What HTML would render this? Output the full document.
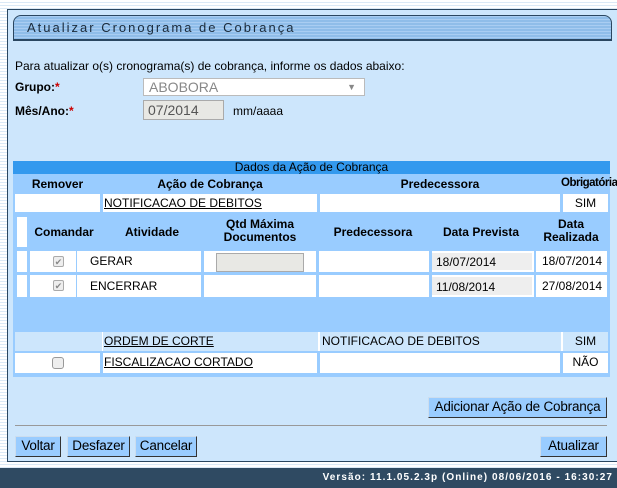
<!DOCTYPE html>
<html><head><meta charset="utf-8"><style>
*{box-sizing:border-box;margin:0;padding:0}
body{width:617px;height:488px;overflow:hidden;position:relative;font-family:"Liberation Sans",Arial,sans-serif;font-size:12px;color:#000;
background:repeating-linear-gradient(#fff 0 2px,#dbe9f6 2px 3px)}
.a{position:absolute;white-space:nowrap}
.panel{left:7px;top:9px;width:612px;height:453px;background:#cde6fc;border:1px solid #2a4660}
.tab{left:13px;top:15px;width:599px;height:26px;border:1px solid #2a4660;border-bottom-width:2px;border-radius:8px 8px 0 0;
background:repeating-linear-gradient(#a9cdf2 0 1px,#8fbde9 1px 3px);font-size:13px;letter-spacing:2px;padding:4px 0 0 13px;color:#1a2a3a}
.sel{left:143px;top:78px;width:222px;height:18px;background:#fff;border:1px solid #bbb;color:#888;font-size:14px;padding:0 5px;line-height:16px}
.inp{background:#e8e8e4;border:1px solid #aaa;color:#555}
.tbl{left:13px;top:161px;width:597px;height:216px;background:#99ccff}
.bar{left:13px;top:161px;width:597px;height:13px;background:#3399ee;text-align:center;font-size:12px;line-height:13px}
.w{background:#fff}
.h{font-weight:bold;text-align:center}
.u{text-decoration:underline}
.btn{background:#99ccff;border:1px solid #333;border-color:#cde #333 #333 #cde;font-size:13.5px;text-align:center;line-height:18px;height:21px;letter-spacing:-0.2px}
.cb{width:11px;height:11px;border:1px solid #aaa;border-radius:2px;background:#eee;font-size:9px;color:#888;text-align:center;line-height:10px}
.foot{left:0;top:468px;width:617px;height:20px;background:#2f4a62;color:#fff;font-family:"Liberation Sans",sans-serif;font-weight:bold;font-size:10px;text-align:right;padding-right:4px;line-height:20px;letter-spacing:1.05px}
</style></head><body>
<div class="a panel"></div>
<div class="a tab">Atualizar Cronograma de Cobrança</div>
<div class="a" style="left:15px;top:59px;">Para atualizar o(s) cronograma(s) de cobrança, informe os dados abaixo:</div>
<div class="a" style="left:15px;top:80px;font-weight:bold">Grupo:<span style="color:#c00">*</span></div>
<div class="a sel">ABOBORA<span style="position:absolute;right:8px;font-size:9px">▼</span></div>
<div class="a" style="left:15px;top:104px;font-weight:bold">Mês/Ano:<span style="color:#c00">*</span></div>
<div class="a inp" style="left:143px;top:100px;width:81px;height:20px;font-size:14px;padding:1px 4px">07/2014</div>
<div class="a" style="left:233px;top:104px">mm/aaaa</div>

<div class="a tbl"></div>
<div class="a bar">Dados da Ação de Cobrança</div>
<div class="a h" style="left:15px;top:177px;width:85px">Remover</div>
<div class="a h" style="left:103px;top:177px;width:214px">Ação de Cobrança</div>
<div class="a h" style="left:320px;top:177px;width:240px">Predecessora</div>
<div class="a h" style="left:561px;top:177px;width:49px;font-size:11.5px;letter-spacing:-0.5px">Obrigatória</div>

<div class="a w" style="left:15px;top:194px;width:85px;height:18px"></div>
<div class="a w u" style="left:103px;top:194px;width:214px;height:18px;padding:2px 1px">NOTIFICACAO DE DEBITOS</div>
<div class="a w" style="left:320px;top:194px;width:240px;height:18px"></div>
<div class="a w" style="left:563px;top:194px;width:45px;height:18px;text-align:center;padding-top:2px">SIM</div>

<div class="a w" style="left:17px;top:217px;width:10px;height:30px"></div>
<div class="a h" style="left:30px;top:225px;width:68px">Comandar</div>
<div class="a h" style="left:100px;top:225px;width:104px">Atividade</div>
<div class="a h" style="left:205px;top:218px;width:110px;line-height:13px">Qtd Máxima<br>Documentos</div>
<div class="a h" style="left:318px;top:225px;width:110px">Predecessora</div>
<div class="a h" style="left:430px;top:225px;width:102px">Data Prevista</div>
<div class="a h" style="left:535px;top:218px;width:72px;line-height:13px">Data<br>Realizada</div>

<div class="a w" style="left:17px;top:251px;width:10px;height:21px"></div>
<div class="a w" style="left:30px;top:251px;width:46px;height:21px"><div class="a cb" style="left:23px;top:5px">✔</div></div>
<div class="a w" style="left:77px;top:251px;width:124px;height:21px;padding:3px 2px 0 13px">GERAR</div>
<div class="a w" style="left:204px;top:251px;width:112px;height:21px"><div class="a inp" style="left:12px;top:2px;width:88px;height:19px"></div></div>
<div class="a w" style="left:319px;top:251px;width:110px;height:21px"></div>
<div class="a w" style="left:432px;top:251px;width:102px;height:21px"><div class="a" style="left:0;top:2px;width:100px;height:17px;background:#eee;padding:2px 4px">18/07/2014</div></div>
<div class="a w" style="left:536px;top:251px;width:71px;height:21px;padding:3px 0 0 6px">18/07/2014</div>

<div class="a w" style="left:17px;top:275px;width:10px;height:22px"></div>
<div class="a w" style="left:30px;top:275px;width:46px;height:22px"><div class="a cb" style="left:23px;top:5px">✔</div></div>
<div class="a w" style="left:77px;top:275px;width:124px;height:22px;padding:4px 2px 0 13px">ENCERRAR</div>
<div class="a w" style="left:204px;top:275px;width:112px;height:22px"></div>
<div class="a w" style="left:319px;top:275px;width:110px;height:22px"></div>
<div class="a w" style="left:432px;top:275px;width:102px;height:22px"><div class="a" style="left:0;top:2px;width:100px;height:18px;background:#eee;padding:3px 4px">11/08/2014</div></div>
<div class="a w" style="left:536px;top:275px;width:71px;height:22px;padding:4px 0 0 6px">27/08/2014</div>

<div class="a" style="left:15px;top:332px;width:593px;height:19px;background:#cde6fc"></div>
<div class="a u" style="left:104px;top:334px">ORDEM DE CORTE</div>
<div class="a" style="left:322px;top:334px">NOTIFICACAO DE DEBITOS</div>
<div class="a" style="left:563px;top:334px;width:45px;text-align:center">SIM</div>
<div class="a" style="left:102px;top:332px;width:1px;height:19px;background:#fff"></div>
<div class="a" style="left:318px;top:332px;width:2px;height:19px;background:#fff"></div>
<div class="a" style="left:561px;top:332px;width:2px;height:19px;background:#fff"></div>

<div class="a w" style="left:15px;top:353px;width:85px;height:20px"><div class="a" style="left:37px;top:4px;width:12px;height:12px;border:1px solid #999;border-radius:3px;background:#eee"></div></div>
<div class="a w u" style="left:103px;top:353px;width:214px;height:20px;padding:2px 1px">FISCALIZACAO CORTADO</div>
<div class="a w" style="left:320px;top:353px;width:240px;height:20px"></div>
<div class="a w" style="left:563px;top:353px;width:45px;height:20px;text-align:center;padding-top:2px">NÃO</div>

<div class="a btn" style="left:428px;top:397px;width:179px">Adicionar Ação de Cobrança</div>
<div class="a" style="left:15px;top:425px;width:592px;height:1px;background:#999"></div>
<div class="a btn" style="left:15px;top:436px;width:46px">Voltar</div>
<div class="a btn" style="left:67px;top:436px;width:63px">Desfazer</div>
<div class="a btn" style="left:135px;top:436px;width:62px">Cancelar</div>
<div class="a btn" style="left:540px;top:436px;width:67px">Atualizar</div>

<div class="a foot">Versão: 11.1.05.2.3p (Online) 08/06/2016 - 16:30:27</div>
</body></html>
